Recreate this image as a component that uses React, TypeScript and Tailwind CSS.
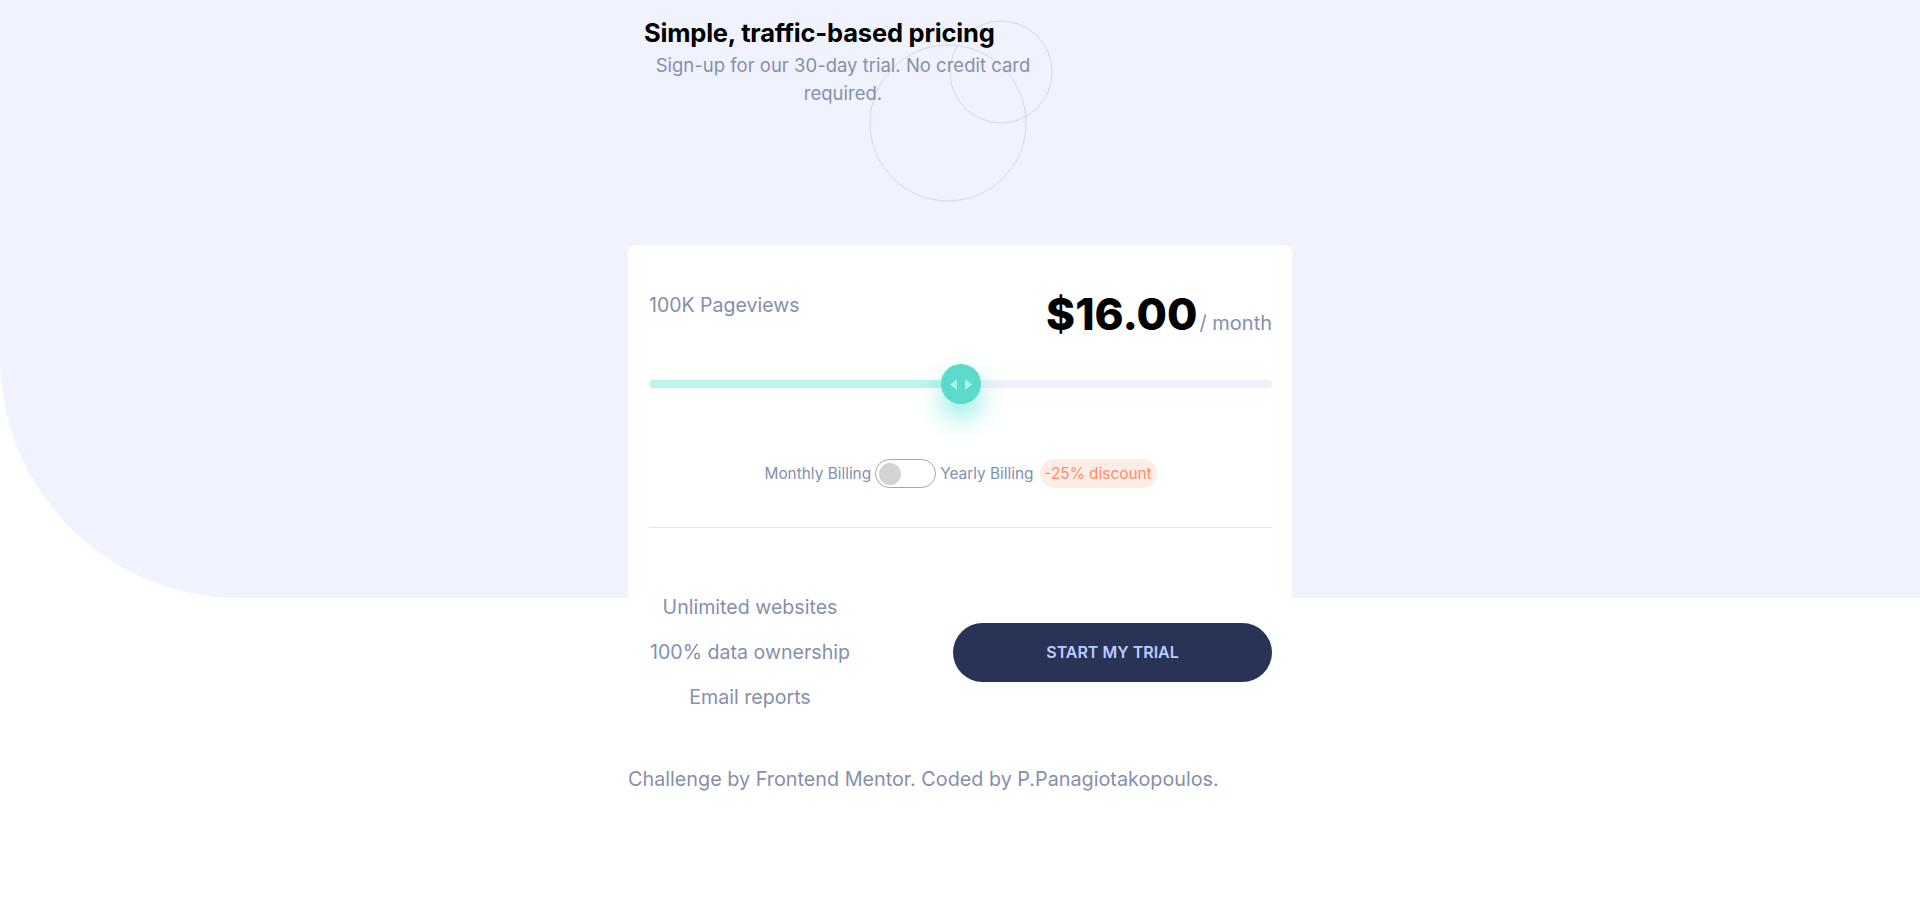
import React from "react";

export default function App() {
  return (
    <div className="relative min-h-[897px] bg-white font-['Inter',sans-serif] overflow-hidden">
      {/* background shape */}
      <div className="absolute left-0 top-0 h-[598px] w-full rounded-bl-[240px] bg-[#f0f3fe]" />

      <div className="relative mx-auto w-[664px]">
        {/* header */}
        <header className="relative w-[430px] pt-[15px]">
          <svg
            className="absolute left-[230px] top-[20px]"
            width="200"
            height="190"
            viewBox="0 0 200 190"
            fill="none"
          >
            <circle cx="90" cy="103" r="78" stroke="#cfd8ef" strokeWidth="1" />
            <circle cx="143" cy="52" r="51" stroke="#cfd8ef" strokeWidth="1" />
          </svg>
          <h1 className="relative pl-[16px] text-[25.5px] leading-[36px] font-bold text-black tracking-[-0.2px]">
            Simple, traffic-based pricing
          </h1>
          <p className="relative text-center text-[18.5px] leading-[28px] text-[#858fad]">
            Sign-up for our 30-day trial. No credit card
            <br />
            required.
          </p>
        </header>

        {/* card */}
        <main className="mt-[138px] rounded-lg bg-white pl-[21px] pr-[20px] pt-[46px] pb-6">
          <div className="flex items-start justify-between">
            <p className="text-[19.5px] leading-[28px] text-[#858fad]">100K Pageviews</p>
            <div className="mt-[1px] flex items-baseline">
              <span className="text-[44px] leading-[44px] font-extrabold text-black">$16.00</span>
              <span className="ml-[2px] text-[20px] text-[#858fad]">/ month</span>
            </div>
          </div>

          {/* slider */}
          <div className="relative mt-[26px] flex h-[40px] items-center">
            <div className="flex h-[8px] w-full overflow-hidden rounded-full bg-[#eef1f9]">
              <div className="h-full w-1/2 bg-[#bbf5ec]" />
            </div>
            <div className="absolute left-1/2 top-0 flex h-[40px] w-[40px] -translate-x-1/2 items-center justify-center gap-[8px] rounded-full bg-[#5cdbca] shadow-[0_14px_26px_rgba(16,215,195,0.45)]">
              <svg width="7" height="11" viewBox="0 0 7 11">
                <path d="M7 0 L0 5.5 L7 11 Z" fill="#a6f5ec" />
              </svg>
              <svg width="7" height="11" viewBox="0 0 7 11">
                <path d="M0 0 L7 5.5 L0 11 Z" fill="#a6f5ec" />
              </svg>
            </div>
          </div>

          {/* billing toggle */}
          <div className="mt-[55px] flex h-[29px] items-center justify-center text-[15.4px] text-[#858fad]">
            <span>Monthly Billing</span>
            <div className="ml-[4px] flex h-[29px] w-[61px] items-center rounded-full border border-[#a7a7ab] bg-white pl-[3px]">
              <div className="h-[22px] w-[22px] rounded-full bg-[#d3d3d6]" />
            </div>
            <span className="ml-[4px]">Yearly Billing</span>
            <span className="ml-[6px] flex h-[29px] w-[117px] items-center justify-center rounded-full bg-[#feece7] text-[#ff8c66]">
              -25% discount
            </span>
          </div>

          <div className="mt-[39px] h-px w-full bg-[#e5e7ee]" />

          {/* bottom */}
          <div className="mt-[65px] flex items-center justify-between">
            <ul className="flex w-[202px] flex-col items-center gap-[17px] whitespace-nowrap text-center text-[19.6px] leading-[28px] text-[#858fad]">
              <li>Unlimited websites</li>
              <li>100% data ownership</li>
              <li>Email reports</li>
            </ul>
            <button className="h-[59px] w-[319px] rounded-full bg-[#293356] text-[16px] font-semibold text-[#bdccff]">
              START MY TRIAL
            </button>
          </div>
        </main>

        <footer className="mt-[30px] text-[19.8px] leading-[28px] text-[#858fad]">
          Challenge by Frontend Mentor. Coded by P.Panagiotakopoulos.
        </footer>
      </div>
    </div>
  );
}
